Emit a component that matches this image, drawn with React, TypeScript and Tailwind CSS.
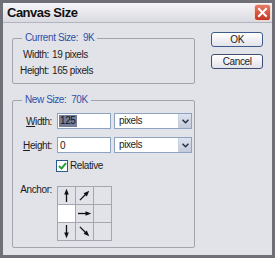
import React from "react";

type Dir = "up" | "upRight" | "right" | "down" | "downRight" | null;

function Arrow({ dir }: { dir: Dir }) {
  if (!dir) return null;
  const rot: Record<string, number> = { up: 0, upRight: 45, right: 90, downRight: 135, down: 180 };
  return (
    <svg width="17" height="17" viewBox="0 0 17 17">
      <g transform={`rotate(${rot[dir]} 8.5 8.5)`}>
        <line x1="8.5" y1="15" x2="8.5" y2="6" stroke="#111" strokeWidth="1.3" />
        <polygon points="8.5,1.8 6.2,7.5 10.8,7.5" fill="#111" />
      </g>
    </svg>
  );
}

function CloseButton() {
  return (
    <div className="w-[17px] h-[17px] mr-[1px] rounded-[3px] border border-[#f3d8d2] bg-gradient-to-b from-[#e67a66] to-[#c4321f] flex items-center justify-center">
      <svg width="11" height="11" viewBox="0 0 11 11">
        <path d="M2 2 L9 9 M9 2 L2 9" stroke="#fff" strokeWidth="2" strokeLinecap="square" />
      </svg>
    </div>
  );
}

function Select() {
  return (
    <div className="w-[78px] h-[16px] border border-[#8ea3c0] bg-white flex items-center justify-between">
      <span className="pl-[4px] leading-[14px]">pixels</span>
      <div className="w-[13px] h-[14px] bg-gradient-to-b from-[#dde3ef] to-[#c2cadc] border-l border-[#c8d0e0] flex items-center justify-center">
        <svg width="7" height="5" viewBox="0 0 7 5">
          <path d="M0.5 0.8 L3.5 3.8 L6.5 0.8" stroke="#2a2f44" strokeWidth="1.5" fill="none" />
        </svg>
      </div>
    </div>
  );
}

export default function App() {
  const anchors: Dir[] = ["up", "upRight", null, null, "right", null, "down", "downRight", null];

  return (
    <div className="w-[275px] h-[258px] flex flex-col border-[3px] border-[#6f6f78] bg-[#e2e2e9] font-['Liberation_Sans',Arial,sans-serif] text-[10px] tracking-[-0.4px] text-[#1c1c1c] overflow-hidden">
      <div className="h-[20px] flex items-center justify-between pl-[4px] bg-gradient-to-b from-[#f6f6f9] to-[#d9d9e1] border-b border-[#b4b4bd]">
        <span className="font-bold text-[13px] tracking-[-0.5px] text-[#111]">Canvas Size</span>
        <CloseButton />
      </div>

      <div className="flex flex-1 px-[9px] pt-[9px] gap-[16px]">
        <div className="w-[184px] flex flex-col gap-[10px]">
          <fieldset className="border border-[#a4a4ae] rounded-[2px] pb-[4px]">
            <legend className="ml-[9px] px-[3px] leading-[12px] text-[#2e52a6]">Current Size:&nbsp; 9K</legend>
            <div className="mt-[3px] grid grid-cols-[36px_1fr] gap-x-[3px] leading-[16px]">
              <span className="text-right">Width:</span>
              <span>19 pixels</span>
              <span className="text-right">Height:</span>
              <span>165 pixels</span>
            </div>
          </fieldset>

          <fieldset className="border border-[#a4a4ae] rounded-[2px] pb-[6px]">
            <legend className="ml-[9px] px-[3px] leading-[12px] text-[#2e52a6]">New Size:&nbsp; 70K</legend>
            <div className="mt-[7px] flex flex-col">
              <div className="flex items-center">
                <span className="w-[39px] text-right">
                  <u>W</u>idth:
                </span>
                <div className="ml-[5px] w-[54px] h-[16px] border border-[#8ea3c0] bg-white flex items-center pl-[1px]">
                  <span className="bg-[#767d96] text-[#14142a] leading-[12px] px-[1px]">125</span>
                </div>
                <div className="ml-[3px]">
                  <Select />
                </div>
              </div>

              <div className="flex items-center mt-[8px]">
                <span className="w-[39px] text-right">
                  <u>H</u>eight:
                </span>
                <div className="ml-[5px] w-[54px] h-[16px] border border-[#8ea3c0] bg-white flex items-center pl-[2px]">
                  <span>0</span>
                </div>
                <div className="ml-[3px]">
                  <Select />
                </div>
              </div>

              <div className="flex items-center mt-[5px] pl-[43px]">
                <div className="w-[12px] h-[12px] border border-[#2a5a8c] bg-white flex items-center justify-center">
                  <svg width="9" height="8" viewBox="0 0 9 8">
                    <path d="M1 4 L3.5 6.5 L8 1.2" stroke="#22a23a" strokeWidth="2" fill="none" />
                  </svg>
                </div>
                <span className="ml-[2px]">Relative</span>
              </div>

              <div className="flex mt-[13px]">
                <span className="w-[39px] text-right leading-[12px] -mt-[2px]">Anchor:</span>
                <div className="ml-[5px] grid grid-cols-[repeat(3,18px)] border-l border-t border-[#a6a6b0]">
                  {anchors.map((d, i) => (
                    <div
                      key={i}
                      className={`w-[18px] h-[18px] border-r border-b border-[#a6a6b0] flex items-center justify-center ${
                        i === 3 ? "bg-white" : ""
                      }`}
                    >
                      <Arrow dir={d} />
                    </div>
                  ))}
                </div>
              </div>
            </div>
          </fieldset>
        </div>

        <div className="w-[52px] flex flex-col gap-[7px]">
          <button className="h-[15px] rounded-[3px] border border-[#3d5c8e] bg-gradient-to-b from-white to-[#e2e3ea] leading-[12px] text-[#1c1c1c]">
            OK
          </button>
          <button className="h-[15px] rounded-[3px] border border-[#3d4f72] bg-gradient-to-b from-white to-[#e2e3ea] leading-[12px] text-[#1c1c1c]">
            Cancel
          </button>
        </div>
      </div>
    </div>
  );
}
